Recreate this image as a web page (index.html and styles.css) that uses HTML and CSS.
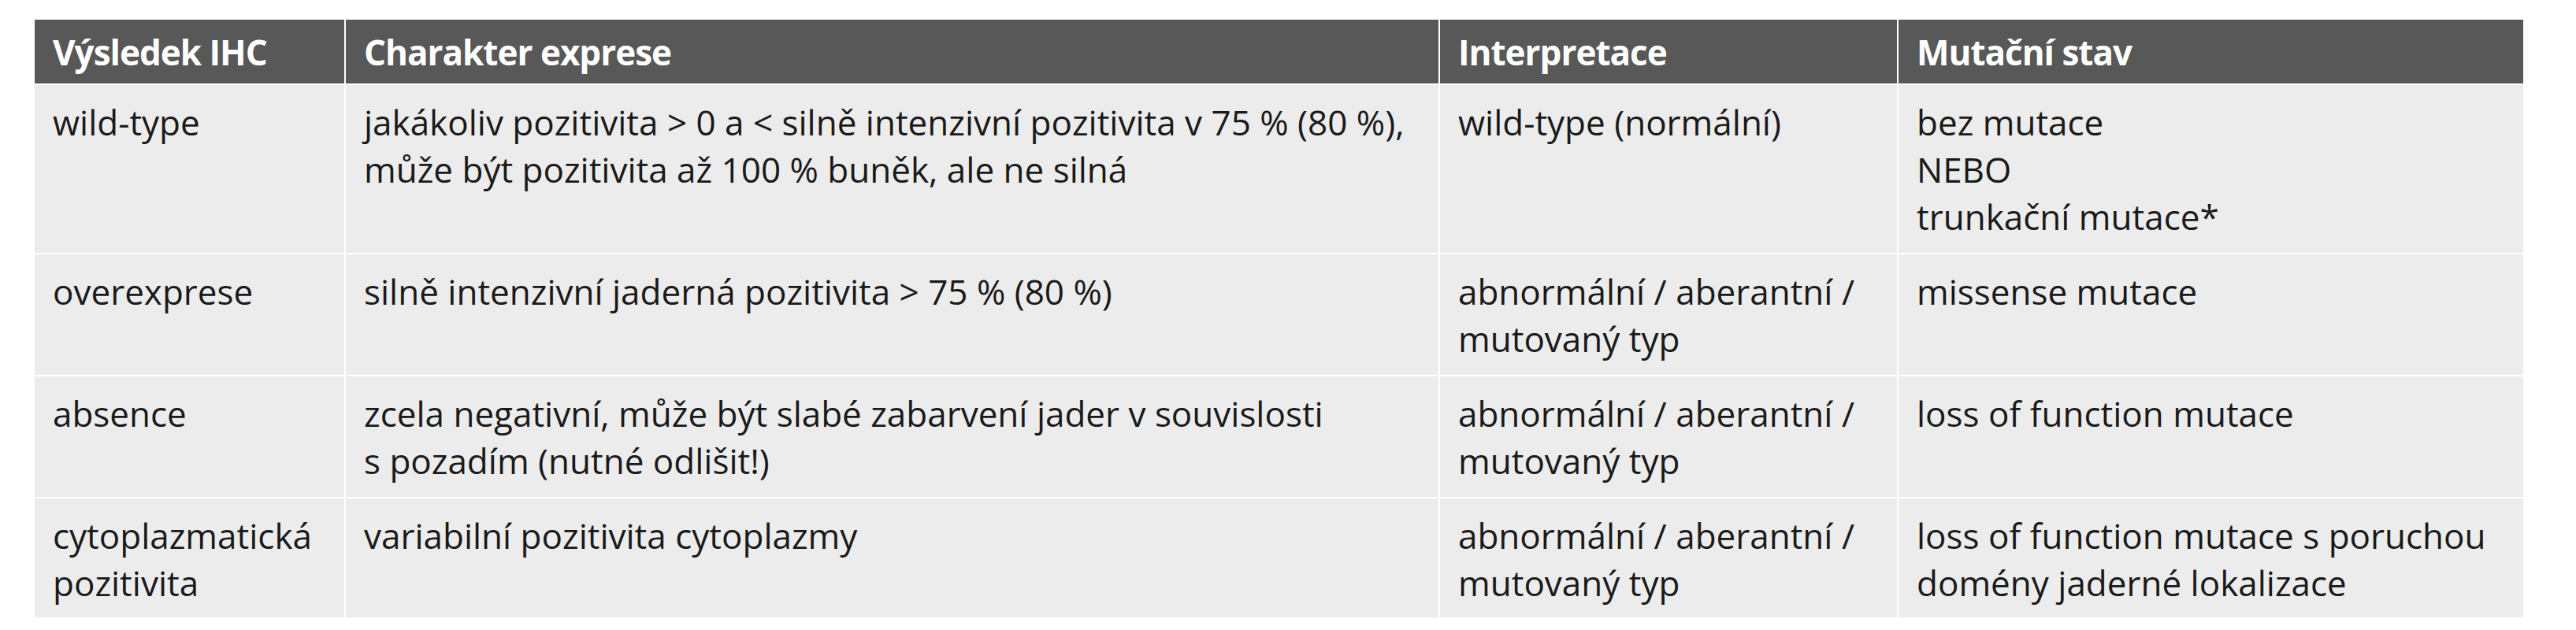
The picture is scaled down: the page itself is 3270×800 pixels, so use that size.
FILE: index.html
```html
<!DOCTYPE html>
<html lang="cs">
<head>
<meta charset="utf-8">
<title>Výsledek IHC</title>
<link rel="stylesheet" href="styles.css">
</head>
<body>
<div class="ihc-table" role="table">
  <div class="cell head">Výsledek IHC</div>
  <div class="cell head">Charakter exprese</div>
  <div class="cell head">Interpretace</div>
  <div class="cell head">Mutační stav</div>

  <div class="cell">wild-type</div>
  <div class="cell">jakákoliv pozitivita &gt; 0 a &lt; silně intenzivní pozitivita v 75&nbsp;% (80&nbsp;%),<br>může být pozitivita až 100&nbsp;% buněk, ale ne silná</div>
  <div class="cell">wild-type (normální)</div>
  <div class="cell">bez mutace<br>NEBO<br>trunkační mutace*</div>

  <div class="cell">overexprese</div>
  <div class="cell">silně intenzivní jaderná pozitivita &gt; 75&nbsp;% (80&nbsp;%)</div>
  <div class="cell">abnormální / aberantní /<br>mutovaný typ</div>
  <div class="cell">missense mutace</div>

  <div class="cell">absence</div>
  <div class="cell">zcela negativní, může být slabé zabarvení jader v souvislosti<br>s pozadím (nutné odlišit!)</div>
  <div class="cell">abnormální / aberantní /<br>mutovaný typ</div>
  <div class="cell">loss of function mutace</div>

  <div class="cell last">cytoplazmatická<br>pozitivita</div>
  <div class="cell last">variabilní pozitivita cytoplazmy</div>
  <div class="cell last">abnormální / aberantní /<br>mutovaný typ</div>
  <div class="cell last">loss of function mutace s poruchou<br>domény jaderné lokalizace</div>
</div>
</body>
</html>
```

FILE: styles.css
```css
* {
  box-sizing: border-box;
}

html, body {
  margin: 0;
  padding: 0;
  background: #ffffff;
}

body {
  font-family: "Open Sans", "Noto Sans", "Liberation Sans", sans-serif;
  font-size: 44px;
  line-height: 60px;
  color: #1a1a1a;
}

.ihc-table {
  display: grid;
  grid-template-columns: 393px 1387px 580px 793px;
  gap: 2px;
  width: max-content;
  margin: 25px 0 0 44px;
}

.cell {
  background: #ececec;
  padding: 17px 10px 16px 23px;
  white-space: nowrap;
}

.cell.head {
  background: #585858;
  color: #ffffff;
  font-weight: 700;
  letter-spacing: -1px;
  padding: 11px 10px 10px 23px;
}

.cell.last {
  padding-bottom: 14px;
}
```
